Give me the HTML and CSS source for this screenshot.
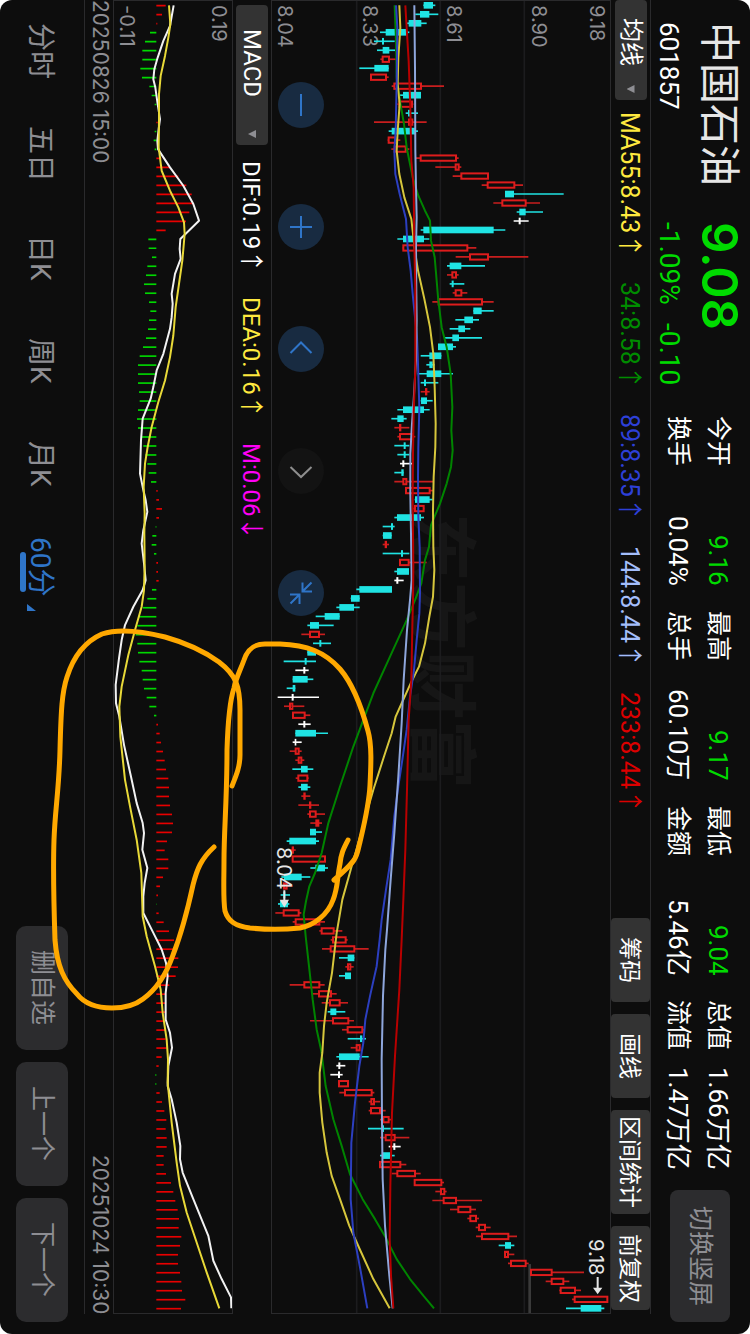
FILE: index.html
```html
<!DOCTYPE html>
<html lang="zh-CN">
<head>
    <meta charset="UTF-8">
    <meta name="viewport" content="width=device-width, initial-scale=1.0">
    <title>中国石油 601857</title>

    <link rel="stylesheet" href="styles.css">
</head>
<body>
    <main class="app">
        <header class="header">
            <div class="stock">
                <h1>中国石油</h1>
                <p>601857</p>
            </div>
            <div class="quote">
                <strong>9.08</strong>
                <p><span>-1.09%</span><span>-0.10</span></p>
            </div>
            <dl class="stats">
                <div><dt>今开</dt><dd class="down">9.16</dd></div>
                <div><dt>最高</dt><dd class="down">9.17</dd></div>
                <div><dt>最低</dt><dd class="down">9.04</dd></div>
                <div><dt>总值</dt><dd>1.66万亿</dd></div>
                <div><dt>换手</dt><dd>0.04%</dd></div>
                <div><dt>总手</dt><dd>60.10万</dd></div>
                <div><dt>金额</dt><dd>5.46亿</dd></div>
                <div><dt>流值</dt><dd>1.47万亿</dd></div>
            </dl>
            <button type="button" class="rotate-btn">切换竖屏</button>
        </header>

        <section class="board">
            <div class="bar ma-bar">
                <div class="picker picker-ma">
                    <select aria-label="主图指标"><option>均线</option></select>
                </div>
                <ul class="legend">
                    <li class="ma55">MA55:8.43<i>↑</i></li>
                    <li class="ma34">34:8.58<i>↑</i></li>
                    <li class="ma89">89:8.35<i>↑</i></li>
                    <li class="ma144">144:8.44<i>↑</i></li>
                    <li class="ma233">233:8.44<i>↑</i></li>
                </ul>
                <div class="tools">
                    <button type="button">筹码</button>
                    <button type="button">画线</button>
                    <button type="button" class="wide">区间统计</button>
                    <button type="button">前复权</button>
                </div>
            </div>

            <div class="chart price-chart">
                <div class="watermark">东方财富</div>
                <div class="axis">
                    <div><span>9.18</span><span>8.90</span></div>
                    <div><span>8.61</span></div>
                    <div><span>8.33</span></div>
                    <div><span>8.04</span></div>
                </div>
                <svg class="plot" id="price" viewBox="36 0 1014 3942" preserveAspectRatio="none"></svg>
                <span class="mark mark-low">8.04</span>
                <span class="mark mark-high">9.18</span>
                <div class="controls">
                    <button type="button" aria-label="缩小">
                        <svg viewBox="-23 -23 46 46"><path d="M0 -11V11"/></svg>
                    </button>
                    <button type="button" aria-label="放大">
                        <svg viewBox="-23 -23 46 46"><path d="M0 -11V11M-11 0H11"/></svg>
                    </button>
                    <button type="button" aria-label="左移">
                        <svg viewBox="-23 -23 46 46"><path d="M-10.5 4L0 -6.5L10.5 4"/></svg>
                    </button>
                    <button type="button" aria-label="右移" class="off">
                        <svg viewBox="-23 -23 46 46"><path d="M-10.5 -4L0 6L10.5 -4"/></svg>
                    </button>
                    <button type="button" aria-label="收起">
                        <svg viewBox="-23 -23 46 46"><path d="M10.5 -10.5L1.5 -1.5M1.5 -10.5V-1.5H11M-10.5 10.5L-1.5 1.5M-1.5 11V1.5H-11"/></svg>
                    </button>
                </div>
            </div>

            <div class="bar macd-bar">
                <div class="picker picker-macd">
                    <select aria-label="副图指标"><option>MACD</option></select>
                </div>
                <ul class="legend">
                    <li class="dif">DIF:0.19<i>↑</i></li>
                    <li class="dea">DEA:0.16<i>↑</i></li>
                    <li class="m">M:0.06<i>↓</i></li>
                </ul>
            </div>

            <div class="chart macd-chart">
                <div class="axis">
                    <div><span>0.19</span><span>-0.11</span></div>
                </div>
                <svg class="plot" id="macd" viewBox="342 0 354 3942" preserveAspectRatio="none"></svg>
            </div>

            <div class="dates">
                <time>20250826 15:00</time>
                <time>20251024 10:30</time>
            </div>
        </section>

        <footer class="footer">
            <nav class="tabs">
                <a href="#">分时</a>
                <a href="#">五日</a>
                <a href="#">日K</a>
                <a href="#">周K</a>
                <a href="#">月K</a>
                <a href="#" class="active">60分</a>
            </nav>
            <div class="actions">
                <button type="button">删自选</button>
                <button type="button">上一个</button>
                <button type="button">下一个</button>
            </div>
        </footer>

        <!-- hand drawn circles over both charts -->
        <svg class="drawing" viewBox="0 0 750 1334" preserveAspectRatio="none">
            <path d="M214 847C201 859 197 869 193 885C188 908 182 932 173 955C165 978 154 991 143 999C134 1006 124 1008 112 1008C96 1008 84 1003 77 994C64 981 57 966 55 940C54 910 53 870 54 840C55 810 59 790 60 750C61 710 62 692 67 677C73 658 84 642 102 634C120 628 145 632 165 637C190 644 208 654 219 662C236 675 240 686 240 710V755C240 767 236 776 232 786"/>
            <path d="M334 880C342 873 350 866 354 860C358 854 358 849 360 842C364 825 369 805 370 785C371 765 372 745 368 731C361 705 352 683 340 669C325 652 307 645 280 644H265C255 644 248 648 244 660C240 671 236 678 234 688C230 700 228 718 227 750C227 800 224 830 224 860C224 880 223 900 225 911C228 921 235 926 250 928C270 930 290 929 300 928C315 925 328 914 333 900C338 888 337 878 340 864C341 853 344 848 348 840"/>
        </svg>
    </main>

    <script src="script.js"></script>
</body>
</html>
```

FILE: styles.css
```css
*{
    margin: 0;
    padding: 0;
    box-sizing: border-box;
}

body{
    background: #fff;
    font-family: Roboto, "Noto Sans CJK SC", sans-serif;
    color: #fff;
}

/* the whole screen reads sideways: lines run top to bottom, rows stack right to left */
.app{
    position: relative;
    display: flex;
    flex-direction: column;
    width: 100vw;
    height: 100vh;
    writing-mode: vertical-rl;
    text-orientation: sideways;
    background: #0d0d0d;
    border-radius: 12px;
    overflow: hidden;
}

button, select{
    font: inherit;
    color: inherit;
    writing-mode: inherit;
    text-orientation: inherit;
    border: none;
    cursor: pointer;
}

ul{
    list-style: none;
}

/* header */
.header{
    flex: none;
    display: flex;
    align-items: flex-start;
    block-size: 99px;
    padding-inline: 22px 12px;
}
.stock, .quote{
    flex: none;
    padding-block-start: 7px;
}
.stock{
    inline-size: 200px;
    font-size: 26px;
}
.quote{
    inline-size: 194px;
    color: #00db00;
    font-size: 28px;
}
.stock h1, .quote strong{
    display: block;
    line-height: 48px;
    margin-block-end: 8px;
}
.stock h1{
    font-size: 41px;
    font-weight: 400;
    color: #e6e6e6;
}
.quote strong{
    font-family: Inter, sans-serif;
    font-size: 49px;
    font-weight: 600;
}
.stock p, .quote p{
    line-height: 36px;
}
.quote p{
    display: flex;
    gap: 18px;
}
.stats{
    flex: 1;
    display: grid;
    grid-template-columns: repeat(4, 1fr);
    column-gap: 25px;
    margin-block-start: 12px;
    font-size: 25px;
    line-height: 40px;
    white-space: nowrap;
}
.stats div{
    display: flex;
    justify-content: space-between;
}
.stats dd{
    font-size: 26px;
}
.stats .down{
    color: #00db00;
}
.rotate-btn{
    inline-size: 132px;
    block-size: 60px;
    margin-block-start: 20px;
    margin-inline-start: 20px;
    border-radius: 8px;
    background: #2c2c2e;
    color: #8e8e93;
    font-size: 25px;
    line-height: 32px;
}

/* charts and their bars */
.board{
    flex: 1;
    display: flex;
    flex-direction: column;
    margin-inline-end: 20px;
    border-block-start: 1px solid #2a2a2c;
}
.bar{
    flex: none;
    display: flex;
    align-items: center;
    block-size: 40px;
    border-block-end: 1px solid #2a2a2c;
    font-size: 24px;
    line-height: 32px;
}
.macd-bar{
    block-size: 39px;
    padding-inline-start: 5px;
}
.picker{
    position: relative;
    block-size: 32px;
    border-radius: 4px;
    background: #333;
}
.picker-ma{
    inline-size: 100px;
}
.picker-macd{
    inline-size: 140px;
}
.picker select{
    appearance: none;
    inline-size: 100%;
    block-size: 32px;
    background: none;
    padding-inline-start: 18px;
}
.picker-macd select{
    padding-inline-start: 24px;
}
.picker::after{
    content: "";
    position: absolute;
    inset-inline-end: 7px;
    inset-block-start: 12px;
    inline-size: 8px;
    block-size: 8px;
    background: #8e8e93;
    clip-path: polygon(0 50%, 100% 0, 100% 100%);
}
.legend{
    display: flex;
    gap: 24px;
    margin-inline-start: 12px;
    white-space: nowrap;
}
.ma-bar .legend{
    font-size: 25px;
}
.macd-bar .legend{
    margin-inline-start: 16px;
}
.legend i{
    font-family: "Noto Sans CJK SC", sans-serif;
    font-style: normal;
}
.ma55, .dea{ color: #ffe93f; }
.ma34{ color: #008c00; }
.ma89{ color: #2d40d8; }
.ma144{ color: #a3bdfb; }
.ma233{ color: #dc0000; }
.m{ color: #ff00f6; }
.tools{
    display: flex;
    gap: 12px;
    margin-inline: auto 4px;
}
.tools button{
    inline-size: 84px;
    block-size: 39px;
    padding-block-start: 3px;
    border-radius: 4px;
    background: #333;
    font-size: 23px;
}
.tools .wide{
    inline-size: 104px;
}
.chart{
    position: relative;
    border-block-end: 1px solid #2a2a2c;
    border-inline: 1px solid #2a2a2c;
}
.price-chart{
    flex: 1;
}
.macd-chart{
    flex: none;
    block-size: 119px;
}
.plot{
    position: absolute;
    top: 0;
    left: 0;
    width: 100%;
    height: 100%;
}
.axis{
    display: flex;
    flex-direction: column;
    block-size: 100%;
    padding-inline-start: 4px;
    font: 20px/26px Inter, sans-serif;
    color: #8e8e93;
}
.axis div{
    flex: 1;
    display: flex;
    flex-direction: column;
    justify-content: flex-end;
}
.axis div:first-child{
    justify-content: space-between;
}
.watermark{
    position: absolute;
    inset-block-start: 126px;
    inset-inline-start: 39%;
    font-size: 69px;
    font-weight: 700;
    line-height: 88px;
    color: #161616;
}
.mark{
    position: absolute;
    font: 20px/24px Inter, sans-serif;
    color: #e6e6e6;
}
.mark-low{
    left: 0;
    top: 846px;
}
.mark-high{
    right: 2px;
    bottom: 38px;
}
.controls{
    position: absolute;
    top: 81px;
    left: 6px;
    display: flex;
    gap: 76px;
}
.controls button{
    width: 46px;
    height: 46px;
    border-radius: 50%;
    background: #182b41;
    color: #2f75c8;
}
.controls .off{
    background: #131313;
    color: #8e8e8e;
}
.controls svg{
    display: block;
    width: 46px;
    height: 46px;
    fill: none;
    stroke: currentColor;
    stroke-width: 2;
}
.dates{
    flex: none;
    display: flex;
    justify-content: space-between;
    block-size: 29px;
    border-block-end: 1px solid #2a2a2c;
    font: 21px/26px Inter, sans-serif;
    color: #8e8e93;
}

/* period tabs */
.footer{
    flex: none;
    display: flex;
    align-items: center;
    justify-content: space-between;
    block-size: 84px;
    padding-inline-end: 12px;
    color: #8e8e93;
}
.tabs{
    display: flex;
    padding-block-start: 4px;
}
.tabs a{
    position: relative;
    inline-size: 103px;
    font-size: 28px;
    line-height: 40px;
    text-align: center;
    color: inherit;
    text-decoration: none;
    white-space: nowrap;
}
.tabs .active{
    color: #2f75c8;
}
.tabs .active::before{
    content: "";
    position: absolute;
    left: 7px;
    top: 89px;
    width: 9px;
    height: 7px;
    background: #2f75c8;
    clip-path: polygon(0 0, 0 100%, 100% 100%);
}
.tabs .active::after{
    content: "";
    position: absolute;
    left: 0;
    top: 37px;
    width: 6px;
    height: 40px;
    border-radius: 3px;
    background: #2f75c8;
}
.actions{
    display: flex;
    gap: 12px;
}
.actions button{
    inline-size: 124px;
    block-size: 52px;
    border-radius: 10px;
    background: #2c2c2e;
    font-size: 25px;
    line-height: 32px;
}

.drawing{
    position: absolute;
    top: 0;
    left: 0;
    width: 100%;
    height: 100%;
    fill: none;
    stroke: #ffa800;
    stroke-width: 5;
    stroke-linecap: round;
    stroke-linejoin: round;
    pointer-events: none;
}

/* plot parts, three units to a pixel */
.plot{
    fill: none;
}
.grid{
    stroke: #1c1c1e;
    stroke-width: 5;
}
.gap{
    stroke: #3a3a3a;
    stroke-width: 8;
}
.wick-r, .wick-c, .wick-w{
    stroke-width: 5;
}
.wick-r{ stroke: #c81e1e; }
.wick-c{ stroke: #1fe3e3; }
.wick-w{ stroke: #fff; }
.body-r{
    fill: #0d0d0d;
    stroke: #de1c1c;
    stroke-width: 6;
}
.body-c{ fill: #1fe3e3; }
.body-w{ fill: #fff; }
.line{
    stroke-width: 6;
    stroke-linejoin: round;
}
.line-ma55{ stroke: #d6c63c; }
.line-ma34{ stroke: #008400; }
.line-ma89{ stroke: #2c3fc0; }
.line-ma144{ stroke: #8ea6dc; }
.line-ma233{ stroke: #b80000; }
.line-dif{ stroke: #f2f2f2; }
.line-dea{ stroke: #e8d938; }
.up{ stroke: #e80000; stroke-width: 5; }
.fall{ stroke: #00d800; stroke-width: 5; }
.pointer{ stroke: #e6e6e6; stroke-width: 6; }
.pointer-head{ fill: #e6e6e6; }
```

FILE: script.js
```js
const STEP = 27;
const START = 13;

// low, body start, body end, high, colour (r rise, c fall, w flat)
const candles = [
    [490,491,519,526,'c'],[466,480,508,535,'c'],[441,446,484,500,'c'],[360,377,440,448,'c'],[342,366,372,404,'c'],
    [351,368,388,405,'c'],[361,366,389,408,'r'],[298,343,386,386,'c'],[331,331,380,386,'r'],[395,401,485,552,'r'],
    [414,429,483,483,'c'],[412,416,458,460,'r'],[437,444,450,474,'c'],[342,445,459,500,'r'],[386,395,465,474,'c'],
    [383,384,408,421,'r'],[394,402,439,448,'r'],[468,480,590,596,'r'],[526,585,598,604,'r'],[578,602,686,686,'r'],
    [665,681,765,789,'r'],[735,735,762,911,'c'],[700,725,799,840,'r'],[770,778,797,849,'c'],[761,776,782,806,'w'],
    [482,490,701,736,'c'],[412,429,492,508,'c'],[428,428,624,649,'r'],[587,628,686,805,'r'],[561,569,604,675,'c'],
    [561,575,590,596,'r'],[569,575,581,613,'c'],[578,585,606,622,'r'],[517,534,668,701,'r'],[640,640,665,701,'c'],
    [586,613,639,657,'c'],[569,595,615,631,'c'],[552,577,597,666,'c'],[534,534,579,588,'c'],[482,508,544,544,'c'],
    [499,508,518,524,'c'],[473,500,544,579,'c'],[482,492,498,535,'c'],[482,496,501,509,'r'],[482,483,501,518,'c'],
    [412,429,492,509,'c'],[394,412,431,440,'c'],[403,418,423,448,'r'],[412,418,458,466,'r'],[403,431,437,448,'c'],
    [412,431,437,448,'c'],[420,427,433,456,'w'],[403,424,431,431,'c'],[403,428,441,519,'r'],[436,436,511,519,'r'],
    [464,465,509,518,'c'],[456,463,493,493,'r'],[403,411,483,492,'c'],[368,393,399,404,'c'],[368,369,395,395,'c'],
    [368,375,380,387,'r'],[368,423,429,448,'c'],[418,418,448,500,'r'],[403,411,447,447,'c'],[403,409,415,431,'w'],
    [289,298,396,396,'c'],[272,273,299,299,'c'],[229,238,282,299,'c'],[167,194,239,239,'c'],[142,150,177,221,'c'],
    [124,148,179,195,'r'],[159,178,184,213,'c'],[142,142,168,168,'c'],[71,134,140,168,'c'],[106,130,136,146,'w'],
    [98,98,143,160,'c'],[80,98,106,106,'c'],[53,95,101,177,'w'],[72,88,99,133,'r'],[96,97,136,151,'r'],
    [115,130,136,152,'w'],[106,106,168,204,'c'],[98,104,109,125,'w'],[89,105,118,125,'r'],[106,114,126,133,'r'],
    [97,123,143,160,'c'],[107,113,144,146,'r'],[115,123,143,151,'c'],[124,131,136,151,'r'],[115,148,153,177,'r'],
    [142,148,169,195,'r'],[151,167,177,186,'r'],[150,150,168,186,'c'],[80,88,168,177,'c'],[89,96,101,107,'r'],
    [96,96,197,197,'r'],[151,166,195,204,'c'],[64,72,125,151,'c'],[62,70,82,98,'r'],[62,70,76,90,'c'],
    [54,60,84,88,'c'],[46,69,118,124,'r'],[98,105,180,195,'r'],[178,183,223,247,'r'],[212,217,259,263,'r'],
    [186,210,285,326,'r'],[237,263,283,283,'c'],[256,262,273,281,'r'],[237,255,273,273,'c'],[89,131,180,194,'r'],
    [159,175,215,230,'r'],[185,208,241,264,'r'],[203,211,229,256,'c'],[150,217,267,282,'r'],[246,261,309,312,'r'],
    [263,300,307,318,'c'],[272,288,301,301,'r'],[229,237,299,326,'c'],[229,235,241,256,'w'],[211,234,240,248,'w'],
    [235,235,266,266,'r'],[238,253,337,343,'r'],[326,332,344,360,'r'],[326,331,362,377,'r'],[360,368,388,396,'r'],
    [324,366,372,431,'c'],[360,375,406,448,'r'],[386,400,406,422,'w'],[360,368,390,404,'c'],[358,358,423,439,'r'],
    [395,410,467,482,'r'],[462,462,546,552,'r'],[526,541,555,560,'r'],[517,549,590,666,'r'],[570,593,633,648,'r'],
    [622,629,650,657,'r'],[647,655,677,692,'r'],[648,664,747,771,'r'],[716,735,753,763,'c'],[732,733,746,763,'r'],
    [744,751,799,806,'r'],[811,811,877,972,'r'],[857,873,912,928,'r'],[898,900,947,963,'r'],[936,942,1044,1044,'r'],
    [918,962,1024,1033,'c']
];

const averages = {
    ma34: '404,13 408,120 410,230 420,300 432,370 440,440 458,530 475,585 495,630 510,660 513,720 524,770 530,840 535,900 545,980 560,1040 572,1120 577,1220 574,1290 578,1350 573,1400 560,1450 540,1510 513,1575 507,1640 495,1680 484,1750 465,1800 440,1860 390,1970 340,2080 310,2160 280,2240 240,2360 205,2470 185,2560 165,2620 148,2660 138,2705 131,2745 137,2810 147,2900 158,3000 170,3090 184,3155 197,3260 220,3360 245,3440 270,3525 308,3600 345,3660 378,3717 410,3780 450,3840 490,3890 522,3928',
    ma55: '418,13 421,80 415,170 413,250 419,310 413,390 410,450 418,520 433,590 454,655 464,745 474,810 493,895 510,980 520,1060 524,1160 527,1270 526,1340 521,1430 519,1530 520,1640 523,1710 519,1790 508,1850 495,1930 477,2000 452,2050 425,2110 407,2150 395,2200 372,2270 340,2370 320,2440 295,2530 275,2600 247,2700 230,2800 216,2920 200,3010 192,3080 187,3160 179,3220 179,3280 187,3370 200,3460 215,3530 240,3600 268,3680 300,3752 340,3840 389,3928',
    ma89: '408,13 412,80 410,250 407,390 403,450 406,520 419,580 438,655 443,740 452,810 458,880 462,920 471,1010 473,1060 478,1220 475,1340 474,1430 475,1550 479,1640 480,1780 478,1840 470,1920 462,2010 450,2090 440,2190 427,2280 415,2360 403,2450 392,2580 378,2670 365,2760 359,2820 350,2900 330,2990 316,3060 310,3130 298,3200 285,3310 274,3430 272,3600 280,3700 300,3805 322,3928',
    ma144: '463,13 465,200 466,450 468,560 470,650 468,740 469,880 470,960 468,1080 461,1200 456,1270 451,1360 451,1480 453,1600 455,1740 450,1800 441,1890 431,2040 425,2170 415,2330 403,2500 392,2640 381,2790 376,2850 369,2990 365,3180 366,3370 368,3540 375,3680 388,3830 398,3928',
    ma233: '436,13 446,180 451,320 454,480 461,560 463,740 466,860 466,1100 461,1240 459,1360 458,1500 460,1700 459,1800 457,1880 454,2040 446,2160 441,2370 436,2550 430,2700 425,2820 418,2970 405,3170 396,3340 391,3560 389,3720 393,3830 400,3928'
};

// ends of the histogram bars, 469 is the zero line
const ZERO = 469;
const bars = [
    497,486,472,450,435,427,427,421,426,448,455,464,469,473,464,461,464,484,510,535,
    559,575,580,568,558,497,445,446,456,442,438,432,435,447,451,447,444,438,429,419,
    414,414,414,417,419,414,411,414,424,430,436,442,446,453,473,477,486,477,467,457,
    455,462,474,474,476,456,442,429,417,412,407,412,414,418,425,428,432,440,448,462,
    474,479,483,489,494,498,505,507,507,510,516,519,516,501,494,505,505,489,480,474,
    468,476,491,507,522,522,535,534,527,508,495,495,495,493,496,497,500,485,476,466,
    466,479,486,493,499,497,500,500,491,491,498,513,520,526,533,537,536,544,540,534,
    534,540,544,546,556,543
];

const signals = {
    dif: '521,13 510,75 490,120 473,170 463,205 460,235 466,260 473,310 480,355 476,385 472,420 474,445 510,500 550,555 580,610 597,660 541,715 539,745 542,775 525,820 515,880 518,910 515,950 510,985 490,1060 470,1110 460,1160 452,1195 428,1255 423,1320 420,1420 428,1460 437,1500 442,1535 430,1590 425,1630 432,1690 437,1740 428,1770 400,1820 375,1875 365,1920 357,1975 347,2055 348,2110 358,2150 372,2235 395,2340 410,2410 428,2470 432,2500 427,2550 442,2605 434,2650 430,2690 430,2740 460,2800 485,2850 498,2890 503,2930 497,2980 497,3060 510,3100 516,3145 505,3200 503,3260 515,3300 530,3370 541,3440 540,3480 548,3520 580,3600 625,3710 640,3785 665,3840 693,3895 694,3928',
    dea: '507,13 511,70 505,110 495,165 482,225 477,280 477,350 476,440 485,510 510,570 535,620 552,665 554,700 547,780 537,850 527,920 520,1005 510,1070 495,1140 475,1205 455,1280 443,1340 435,1390 431,1460 434,1540 433,1600 434,1700 432,1770 425,1820 405,1890 385,1965 365,2060 358,2120 361,2210 375,2340 390,2420 410,2520 424,2620 428,2750 440,2810 465,2900 482,2970 488,3040 500,3120 504,3180 503,3250 515,3370 530,3490 540,3560 560,3640 590,3730 620,3820 658,3928'
};

const drawLines = (lines) => Object.keys(lines)
    .map((name) => `<polyline class="line line-${name}" points="${lines[name]}"/>`)
    .join('');

const drawCandle = ([low, from, to, high, color], i) => {
    const y = START + STEP * i;
    const inset = color === 'r' ? 2 : 0;
    const width = Math.max(to - from - inset * 2, 1);
    return `<path class="wick-${color}" d="M${low} ${y}H${high}"/>` +
        `<rect class="body-${color}" x="${from + inset}" y="${y - 10 + inset}" width="${width}" height="${20 - inset * 2}"/>`;
};

const drawBar = (end, i) =>
    `<path class="${end > ZERO ? 'up' : 'fall'}" d="M${ZERO} ${START + STEP * i + 1}H${end}"/>`;

document.getElementById('price').innerHTML =
    '<path class="grid" d="M290 0V3942M541 0V3942M793 0V3942"/>' +
    '<path class="gap" d="M809 3795V3942"/>' +
    candles.map(drawCandle).join('') +
    drawLines(averages) +
    '<path class="pointer" d="M73 2672V2712M1013 3834V3875"/>' +
    '<path class="pointer-head" d="M59 2700H87L73 2724ZM999 3866H1027L1013 3886Z"/>';

document.getElementById('macd').innerHTML =
    bars.map(drawBar).join('') + drawLines(signals);
```
